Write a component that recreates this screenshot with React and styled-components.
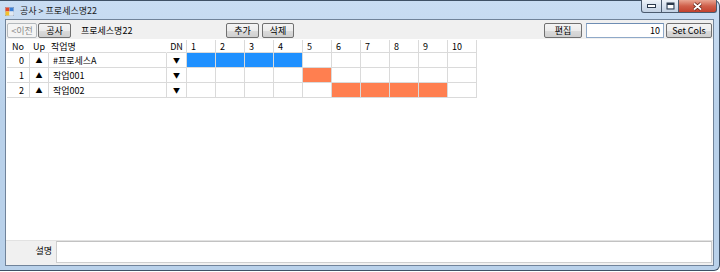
import React from 'react';
import styled, { createGlobalStyle } from 'styled-components';

const Global = createGlobalStyle`
  html, body {
    margin: 0;
    padding: 0;
    background: #ffffff;
  }

  body {
    font-family: "Noto Sans CJK KR", "Noto Sans", sans-serif;
    font-size: 9px;
    color: #000;
  }
`;

const Window = styled.div`
  width: 720px;
  height: 271px;
  box-sizing: border-box;
  display: flex;
  flex-direction: column;
  padding: 0 5px 4px 5px;
  border: 1px solid #3f5166;
  border-left: none;
  border-radius: 0 6px 6px 0;
  background: linear-gradient(to bottom, #c9ddf3, #b9d1ea 40%, #b9d1ea);
`;

const TitleBar = styled.div`
  height: 18px;
  display: flex;
  align-items: flex-start;
`;

const AppIcon = styled.svg`
  margin-top: 6px;
  width: 9px;
  height: 9px;
`;

const Title = styled.div`
  margin: 4px 0 0 6px;
  font-size: 9px;
  line-height: 12px;
  color: #1a1a1a;
`;

const Captions = styled.div`
  margin: -1px -3px 0 auto;
  display: flex;
`;

const CaptionButton = styled.div`
  width: ${p => p.w}px;
  height: 13px;
  box-sizing: border-box;
  display: flex;
  align-items: center;
  justify-content: center;
  border: 1px solid #4b5b6f;
  border-top: none;
  border-left: ${p => (p.first ? '1px solid #4b5b6f' : 'none')};
  border-radius: ${p => (p.first ? '0 0 0 3px' : p.last ? '0 0 3px 0' : '0')};
  background: ${p => (p.close
    ? 'linear-gradient(to bottom, #e9a592, #d0604b 50%, #c2412d)'
    : 'linear-gradient(to bottom, #eef3f9, #d6e1ee 50%, #c3d2e4)')};
`;

const Client = styled.div`
  flex: 1;
  display: flex;
  flex-direction: column;
  border: 1px solid #70839a;
  background: #f0f0f0;
`;

const Toolbar = styled.div`
  height: 19px;
  box-sizing: border-box;
  display: flex;
  align-items: flex-start;
  padding: 3px 1px 0 1px;
`;

const Button = styled.div`
  width: ${p => p.w}px;
  height: 15px;
  margin-left: ${p => p.ml || 0}px;
  box-sizing: border-box;
  display: flex;
  align-items: center;
  justify-content: center;
  border: 1px solid ${p => (p.disabled ? '#b3b8bc' : '#707070')};
  border-radius: 2px;
  color: ${p => (p.disabled ? '#8a8a8a' : '#000')};
  background: ${p => (p.disabled
    ? '#f4f4f4'
    : 'linear-gradient(to bottom, #f4f4f4, #ececec 50%, #dcdcdc 50%, #cfcfcf)')};
  font-size: 9px;
  line-height: 1;
  white-space: nowrap;
`;

const Caption = styled.div`
  width: 145px;
  margin-left: 10px;
  height: 15px;
  line-height: 15px;
  font-size: 9px;
`;

const Spacer = styled.div`
  flex: 1;
`;

const NumberInput = styled.div`
  width: 78px;
  height: 15px;
  margin-left: 4px;
  box-sizing: border-box;
  border: 1px solid #8fa9c8;
  border-top-color: #6e8db3;
  background: #fff;
  text-align: right;
  padding-right: 3px;
  line-height: 13px;
  font-size: 9px;
`;

const GridArea = styled.div`
  flex: 1;
  background: #fff;
  padding: 1px 0 0 1px;
`;

const Row = styled.div`
  display: flex;
  height: ${p => (p.header ? 13 : 15)}px;
`;

const Cell = styled.div`
  width: ${p => p.w}px;
  box-sizing: border-box;
  flex: none;
  border-bottom: 1px solid #dadada;
  border-right: ${p => (p.open ? '1px solid transparent' : '1px solid #dadada')};
  background: ${p => p.fill || 'transparent'};
  display: flex;
  align-items: center;
  justify-content: ${p => p.align || 'flex-start'};
  padding: 0 ${p => (p.align === 'flex-end' ? 5 : 0)}px 0 ${p => (p.align ? 0 : p.pl || 3)}px;
  font-size: 9px;
  white-space: nowrap;
  overflow: hidden;
`;

const Arrow = styled.span`
  font-size: 7px;
  line-height: 1;
`;

const Footer = styled.div`
  height: 25px;
  box-sizing: border-box;
  display: flex;
  align-items: flex-start;
  border-top: 1px solid #e2e2e2;
`;

const FooterLabel = styled.div`
  width: 46px;
  height: 22px;
  line-height: 20px;
  text-align: right;
  font-size: 9px;
`;

const MemoBox = styled.div`
  flex: 1;
  height: 22px;
  margin-left: 4px;
  margin-right: 1px;
  box-sizing: border-box;
  border: 1px solid #cfcfcf;
  border-top-color: #c2c2c2;
  background: #fff;
`;

const BLUE = '#1e90ff';
const CORAL = '#ff7f50';

const rows = [
  { no: 0, name: '#프로세스A', from: 1, to: 4, color: BLUE },
  { no: 1, name: '작업001', from: 5, to: 5, color: CORAL },
  { no: 2, name: '작업002', from: 6, to: 9, color: CORAL },
];

const steps = [1, 2, 3, 4, 5, 6, 7, 8, 9, 10];

function Icon() {
  return (
    <AppIcon viewBox="0 0 9 9">
      <rect x="0" y="0" width="9" height="9" fill="#ffffff" stroke="#5b6f8a" strokeWidth="0.8" />
      <rect x="0.5" y="0.5" width="4" height="4" fill="#e2462b" />
      <rect x="4.5" y="0.5" width="4" height="4" fill="#3a7fd5" />
      <rect x="0.5" y="4.5" width="4" height="4" fill="#f2c12e" />
      <rect x="4.5" y="4.5" width="4" height="4" fill="#dfe8f2" />
    </AppIcon>
  );
}

export default function App() {
  return (
    <>
      <Global />
      <Window>
        <TitleBar>
          <Icon />
          <Title>공사 &gt; 프로세스명22</Title>
          <Captions>
            <CaptionButton w={21} first>
              <svg width="9" height="4" viewBox="0 0 9 4">
                <rect x="0.5" y="0.5" width="8" height="3" fill="#fff" stroke="#2b3a4d" />
              </svg>
            </CaptionButton>
            <CaptionButton w={17}>
              <svg width="9" height="8" viewBox="0 0 9 8">
                <rect x="1" y="1" width="7" height="6" fill="none" stroke="#2b3a4d" strokeWidth="1" />
                <rect x="2" y="3" width="5" height="3" fill="#fff" />
                <rect x="1" y="1" width="7" height="2" fill="#2b3a4d" />
              </svg>
            </CaptionButton>
            <CaptionButton w={38} last close>
              <svg width="11" height="9" viewBox="0 0 11 9">
                <path d="M2 1.5 L9 7.5 M9 1.5 L2 7.5" stroke="#5a1f14" strokeWidth="3.4" />
                <path d="M2 1.5 L9 7.5 M9 1.5 L2 7.5" stroke="#fff" strokeWidth="1.8" />
              </svg>
            </CaptionButton>
          </Captions>
        </TitleBar>

        <Client>
          <Toolbar>
            <Button w={30} disabled>&lt;이전</Button>
            <Button w={33} ml={1}>공사</Button>
            <Caption>프로세스명22</Caption>
            <Button w={33}>추가</Button>
            <Button w={32} ml={3}>삭제</Button>
            <Spacer />
            <Button w={38}>편집</Button>
            <NumberInput>10</NumberInput>
            <Button w={46} ml={2}>Set Cols</Button>
          </Toolbar>

          <GridArea>
            <Row header>
              <Cell w={23} open align="center">No</Cell>
              <Cell w={19} open align="center">Up</Cell>
              <Cell w={118} open pl={2}>작업명</Cell>
              <Cell w={20} align="center">DN</Cell>
              {steps.map(s => (
                <Cell key={s} w={29} pl={4}>{s}</Cell>
              ))}
            </Row>
            {rows.map(r => (
              <Row key={r.no}>
                <Cell w={23} align="flex-end">{r.no}</Cell>
                <Cell w={19} align="center"><Arrow>▲</Arrow></Cell>
                <Cell w={118} pl={4}>{r.name}</Cell>
                <Cell w={20} align="center"><Arrow>▼</Arrow></Cell>
                {steps.map(s => (
                  <Cell
                    key={s}
                    w={29}
                    fill={s >= r.from && s <= r.to ? r.color : undefined}
                  />
                ))}
              </Row>
            ))}
          </GridArea>

          <Footer>
            <FooterLabel>설명</FooterLabel>
            <MemoBox />
          </Footer>
        </Client>
      </Window>
    </>
  );
}
